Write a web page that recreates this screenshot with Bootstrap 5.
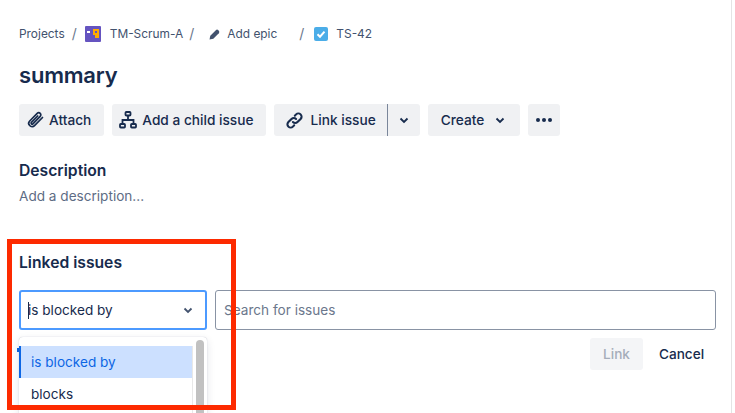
<!DOCTYPE html>
<html lang="en">
<head>
<meta charset="utf-8">
<title>TS-42</title>
<link href="https://cdn.jsdelivr.net/npm/bootstrap@5.3.0/dist/css/bootstrap.min.css" rel="stylesheet">
<style>
html,body{height:413px;overflow:hidden;background:#fff}
body{font-family:Inter,"Liberation Sans",sans-serif;color:#172b4d;font-size:13.6px;position:relative}
.issue-page{padding:0 15px 0 19px;width:732px;height:413px;overflow:hidden;border-right:1px solid #e4e4e4}
.crumbs{height:20px;margin-top:24px;font-size:11.900px;color:#42526e;line-height:20px}
.crumbs .sep{color:#6b778c;font-size:14px}
.crumb-title{font-size:22px;font-weight:600;line-height:28px;margin:17px 0 15px;letter-spacing:-.2px}
.tool{height:32px;background:#f0f1f3;border:0;border-radius:3px;color:#172b4d;font-size:13.700px;font-weight:500;padding:0 12px 0 7px;display:flex;align-items:center;gap:5px}
.tool svg{display:block;flex:none}
.tool-attach{padding-right:13px}
.tool-split{border-right:1px solid #7a869a;border-radius:3px 0 0 3px;padding:0 11px 0 11px;gap:7px}
.tool-caret{border-radius:0 3px 3px 0;padding:0;width:32px;justify-content:center}
.tool-create{padding:0 15px 0 13px;gap:11px}
.tool-more{width:32px;padding:0;justify-content:center}
.desc-label{font-size:15.700px;font-weight:600;line-height:20px;margin-top:25px}
.desc-hint{color:#5e6c84;line-height:20px;margin-top:5px}
.link-label{font-size:15.700px;font-weight:600;line-height:20px;margin-top:47px}
.field-row{margin-top:17px;gap:8px}
.type-box{width:188px;height:40px;border:2px solid #4c9aff;border-radius:3px;padding:0 12px 0 7px;line-height:36px;flex:none}
.cursor{display:inline-block;width:1px;height:17px;background:#172b4d;vertical-align:-4px;margin-right:-1px}
.search-box{height:40px;border:1px solid #8993a4;border-radius:3px;padding:0 8px;line-height:38px;color:#6b778c;flex:1}
.act-row{margin-top:8px;margin-right:4px;gap:8px}
.act-link{width:53px;height:32px;background:#f4f5f7;color:#a5adba;border:0;border-radius:3px;font-weight:500}
.act-cancel{width:61px;height:32px;background:none;border:0;padding:0;color:#172b4d;font-weight:500}
.type-menu{position:absolute;left:19px;top:337px;width:188px;height:76px;background:#fff;border-radius:4px 4px 0 0;box-shadow:0 0 1px rgba(9,30,66,.3),0 3px 8px rgba(9,30,66,.12);padding-top:9px;display:flex;overflow:hidden}
.menu-list{width:174px;border-right:1px solid #e8e8e8}
.menu-row{height:32px;line-height:32px;padding-left:12px}
.menu-row.on{background:#cce0ff;color:#0c66e4;border-left:2px solid #0c66e4;padding-left:10px}
.menu-track{position:absolute;right:0;top:0;width:15px;height:100%}
.menu-thumb{position:absolute;left:4px;top:3px;width:8px;height:90px;background:#c1c1c1;border-radius:4px}
.annot{position:absolute;left:7px;top:239px;width:229px;height:171px;border:5px solid #fd2a00;pointer-events:none}
.blue-tip{position:absolute;left:17px;top:348px;width:3px;height:4px;background:#0c66e4}
</style>
</head>
<body>
<div class="issue-page">
  <nav class="crumbs d-flex align-items-center">
    <span>Projects</span>
    <span class="sep" style="margin-left:7px">/</span>
    <svg style="margin-left:8px" width="16" height="16" viewBox="0 0 16 16"><rect width="16" height="16" rx="1" fill="#6554c0"/><rect x="8" y="3" width="6" height="6" fill="#ffab00"/><rect x="10" y="5" width="2" height="2" fill="#6554c0"/><rect x="10" y="9" width="4" height="3" fill="#ffab00"/><rect x="2" y="5" width="3" height="2" fill="#fff"/></svg>
    <span style="margin-left:9px">TM-Scrum-A</span>
    <span class="sep" style="margin-left:6px">/</span>
    <svg style="margin-left:15px" width="12" height="12" viewBox="0 0 12 12"><path d="M.5 11.500l.8-3.800 5.500-5.500a1.800 1.800 0 0 1 2.500 0l.5.5a1.800 1.800 0 0 1 0 2.500l-5.500 5.500z" fill="#42526e"/></svg>
    <span style="margin-left:6px">Add epic</span>
    <span class="sep" style="margin-left:22px">/</span>
    <svg style="margin-left:10px" width="14" height="14" viewBox="0 0 14 14"><rect width="14" height="14" rx="2" fill="#4bade8"/><path d="M3.500 7.200l2.500 2.500 4.500-5" fill="none" stroke="#fff" stroke-width="2"/></svg>
    <span style="margin-left:8px">TS-42</span>
  </nav>
  <h1 class="crumb-title">summary</h1>
  <div class="d-flex" style="gap:8px">
    <button class="tool tool-attach" type="button">
      <svg width="18" height="18" viewBox="0 0 18 18" fill="none" stroke="#172b4d" stroke-width="1.700" stroke-linecap="round"><path d="M16.500 6.500l-8 8.200a3.200 3.200 0 0 1-4.800-.2 3.200 3.200 0 0 1 0-4.500l7.500-7.700a2.100 2.100 0 0 1 3 3l-7.300 7.500a1 1 0 0 1-1.500-1.400l6.300-6.400"/></svg>
      Attach
    </button>
    <button class="tool" type="button">
      <svg width="18" height="18" viewBox="0 0 18 18" fill="none" stroke="#172b4d" stroke-width="1.800"><rect x="6.500" y="1" width="5" height="3.500" rx=".8"/><rect x="1" y="13" width="5" height="3.500" rx=".8"/><rect x="12" y="13" width="5" height="3.500" rx=".8"/><path d="M9 4.500V9M3.500 13V9h11v4"/></svg>
      Add a child issue
    </button>
    <div class="d-flex">
      <button class="tool tool-split" type="button">
        <svg width="19" height="19" viewBox="0 0 18 18" fill="none" stroke="#172b4d" stroke-width="2" stroke-linecap="round"><path d="M7.500 10.500a3 3 0 0 0 4.300 0l3-3a3 3 0 0 0-4.300-4.300L9.300 4.400"/><path d="M10.500 7.500a3 3 0 0 0-4.300 0l-3 3a3 3 0 0 0 4.300 4.300l1.200-1.200"/></svg>
        Link issue
      </button>
      <button class="tool tool-caret" type="button" aria-label="More link options">
        <svg width="10" height="7" viewBox="0 0 10 7" fill="none" stroke="#172b4d" stroke-width="1.800"><path d="M1.500 1.500L5 5l3.500-3.500"/></svg>
      </button>
    </div>
    <button class="tool tool-create" type="button">
      Create
      <svg width="10" height="7" viewBox="0 0 10 7" fill="none" stroke="#172b4d" stroke-width="1.800"><path d="M1.500 1.500L5 5l3.500-3.500"/></svg>
    </button>
    <button class="tool tool-more" type="button" aria-label="More">
      <svg width="18" height="6" viewBox="0 0 18 6" fill="#172b4d"><circle cx="3" cy="3" r="2"/><circle cx="9" cy="3" r="2"/><circle cx="15" cy="3" r="2"/></svg>
    </button>
  </div>
  <div class="desc-label">Description</div>
  <div class="desc-hint">Add a description...</div>
  <div class="link-label">Linked issues</div>
  <div class="field-row d-flex">
    <div class="type-box d-flex justify-content-between align-items-center">
      <span><span class="cursor"></span>is blocked by</span>
      <svg width="10" height="7" viewBox="0 0 10 7" fill="none" stroke="#42526e" stroke-width="1.800"><path d="M1.500 1.500L5 5l3.500-3.500"/></svg>
    </div>
    <div class="search-box">Search for issues</div>
  </div>
  <div class="act-row d-flex justify-content-end">
    <button class="act-link" type="button" disabled>Link</button>
    <button class="act-cancel" type="button">Cancel</button>
  </div>
</div>
<div class="blue-tip"></div>
<div class="type-menu">
  <div class="menu-list">
    <div class="menu-row on">is blocked by</div>
    <div class="menu-row">blocks</div>
  </div>
  <div class="menu-track"><div class="menu-thumb"></div></div>
</div>
<div class="annot"></div>
<script src="https://cdn.jsdelivr.net/npm/bootstrap@5.3.0/dist/js/bootstrap.bundle.min.js"></script>
</body>
</html>
